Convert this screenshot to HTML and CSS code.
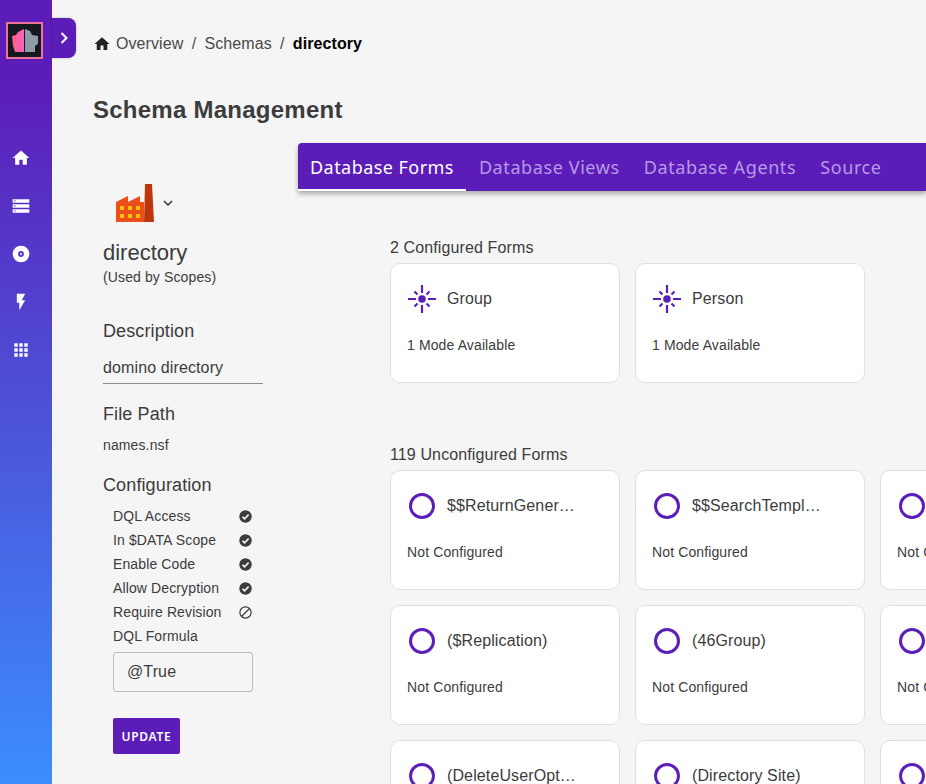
FILE: index.html
```html
<!DOCTYPE html>
<html lang="en">
<head>
    <meta charset="UTF-8">
    <meta name="viewport" content="width=device-width, initial-scale=1.0">
    <title>Schema Management</title>
    <link rel="stylesheet" href="styles.css">
</head>
<body>
    <div class="app">
        <nav class="sidebar">
            <div class="logo">
                <svg viewBox="0 0 33 33" width="33" height="33">
                    <defs>
                        <linearGradient id="logoPink" x1="0" x2="1" y1="0" y2="0">
                            <stop offset="0" stop-color="#ff5f7f"/>
                            <stop offset="1" stop-color="#ff62c4"/>
                        </linearGradient>
                    </defs>
                    <rect width="33" height="33" fill="#14181f"/>
                    <path d="M4 12l4-1 2-3 6-3v23H7l-2-6z" fill="url(#logoPink)"/>
                    <path d="M17 5l5 2 2 4 6 1v8l-3 2v6H17z" fill="#8f9ba6"/>
                </svg>
            </div>
            <ul class="side-icons">
                <li>
                    <svg viewBox="0 0 24 24" width="20" height="20"><path d="M10 20v-6h4v6h5v-8h3L12 3 2 12h3v8z"/></svg>
                </li>
                <li>
                    <svg viewBox="0 0 24 24" width="20" height="20"><path fill-rule="evenodd" d="M2 4h20v4H2zM4 5.3v1.4h1.6V5.3zM2 10h20v4H2zM4 11.3v1.4h1.6v-1.4zM2 16h20v4H2zM4 17.3v1.4h1.6v-1.4z"/></svg>
                </li>
                <li>
                    <svg viewBox="0 0 24 24" width="20" height="20"><path fill-rule="evenodd" d="M12 2a10 10 0 1 0 0 20 10 10 0 0 0 0-20zm0 6.5a3.500 3.500 0 1 1 0 7 3.500 3.500 0 0 1 0-7zm0 2.300a1.200 1.200 0 1 0 0 2.400 1.200 1.200 0 0 0 0-2.400z"/></svg>
                </li>
                <li>
                    <svg viewBox="0 0 24 24" width="20" height="20"><path d="M7 2v11h3v9l7-12h-4l4-8z"/></svg>
                </li>
                <li>
                    <svg viewBox="0 0 24 24" width="20" height="20"><path d="M4 4h4v4H4zM10 4h4v4h-4zM16 4h4v4h-4zM4 10h4v4H4zM10 10h4v4h-4zM16 10h4v4h-4zM4 16h4v4H4zM10 16h4v4h-4zM16 16h4v4h-4z"/></svg>
                </li>
            </ul>
        </nav>
        <button class="side-toggle">
            <svg viewBox="0 0 24 24" width="20" height="20"><path d="M9 6l6 6-6 6" fill="none" stroke="#fff" stroke-width="2.4"/></svg>
        </button>

        <main class="main">
            <div class="breadcrumb">
                <svg viewBox="0 0 24 24" width="18" height="18"><path d="M10 20v-6h4v6h5v-8h3L12 3 2 12h3v8z"/></svg>
                <span class="crumb">Overview</span>
                <span class="sep">/</span>
                <span class="crumb">Schemas</span>
                <span class="sep">/</span>
                <span class="crumb current">directory</span>
            </div>
            <h1>Schema Management</h1>

            <div class="layout">
                <aside class="details">
                    <div class="schema-icon">
                        <svg viewBox="0 0 38 38" width="38" height="38">
                            <path d="M0 38V18l12-6v6l12-6v6h4V38z" fill="#e94e1b"/>
                            <path d="M29 0h7l2 38H28z" fill="#bf360c"/>
                            <path d="M4 22h4v4H4zM12 22h4v4h-4zM20 22h4v4h-4zM4 30h4v4H4zM12 30h4v4h-4zM20 30h4v4h-4z" fill="#ffc107"/>
                        </svg>
                        <svg class="chevron" viewBox="0 0 24 24" width="16" height="16"><path d="M6 9l6 6 6-6" fill="none" stroke="#333" stroke-width="2.2"/></svg>
                    </div>
                    <div class="schema-name">directory</div>
                    <div class="schema-note">(Used by Scopes)</div>

                    <h2 class="desc-title">Description</h2>
                    <div class="desc-field">domino directory</div>

                    <h2 class="path-title">File Path</h2>
                    <div class="path-value">names.nsf</div>

                    <h2 class="config-title">Configuration</h2>
                    <ul class="config">
                        <li>DQL Access
                            <svg viewBox="0 0 24 24" width="13" height="13"><circle cx="12" cy="12" r="11.5" fill="#3c3c3c"/><path d="M6.5 12.5l3.8 3.8 7.500-8" fill="none" stroke="#fff" stroke-width="2.8"/></svg>
                        </li>
                        <li>In $DATA Scope
                            <svg viewBox="0 0 24 24" width="13" height="13"><circle cx="12" cy="12" r="11.5" fill="#3c3c3c"/><path d="M6.5 12.5l3.8 3.8 7.500-8" fill="none" stroke="#fff" stroke-width="2.8"/></svg>
                        </li>
                        <li>Enable Code
                            <svg viewBox="0 0 24 24" width="13" height="13"><circle cx="12" cy="12" r="11.5" fill="#3c3c3c"/><path d="M6.5 12.5l3.8 3.8 7.500-8" fill="none" stroke="#fff" stroke-width="2.8"/></svg>
                        </li>
                        <li>Allow Decryption
                            <svg viewBox="0 0 24 24" width="13" height="13"><circle cx="12" cy="12" r="11.5" fill="#3c3c3c"/><path d="M6.5 12.5l3.8 3.8 7.500-8" fill="none" stroke="#fff" stroke-width="2.8"/></svg>
                        </li>
                        <li>Require Revision
                            <svg viewBox="0 0 24 24" width="13" height="13"><circle cx="12" cy="12" r="10.4" fill="none" stroke="#3c3c3c" stroke-width="2.2"/><path d="M5 19L19 5" stroke="#3c3c3c" stroke-width="2.2"/></svg>
                        </li>
                        <li>DQL Formula</li>
                    </ul>
                    <div class="formula">@True</div>
                    <button class="update">UPDATE</button>
                </aside>

                <section class="content">
                    <div class="tabs">
                        <a class="tab active">Database Forms</a>
                        <a class="tab">Database Views</a>
                        <a class="tab">Database Agents</a>
                        <a class="tab">Source</a>
                    </div>

                    <div class="forms">
                        <div class="group-label">2 Configured Forms</div>
                        <div class="cards">
                            <div class="card">
                                <div class="card-head">
                                    <svg class="burst" viewBox="0 0 28 28" width="28" height="28"><circle cx="14" cy="14" r="3.8"/><path d="M14 0v8M14 20v8M0 14h8M20 14h8M6.500 6.500l3 3M18.500 18.500l3 3M6.500 21.500l3-3M18.500 9.500l3-3" fill="none" stroke="#5b1eb9" stroke-width="2.2"/></svg>
                                    <span class="card-title">Group</span>
                                </div>
                                <div class="card-note">1 Mode Available</div>
                            </div>
                            <div class="card">
                                <div class="card-head">
                                    <svg class="burst" viewBox="0 0 28 28" width="28" height="28"><circle cx="14" cy="14" r="3.8"/><path d="M14 0v8M14 20v8M0 14h8M20 14h8M6.500 6.500l3 3M18.500 18.500l3 3M6.500 21.500l3-3M18.500 9.500l3-3" fill="none" stroke="#5b1eb9" stroke-width="2.2"/></svg>
                                    <span class="card-title">Person</span>
                                </div>
                                <div class="card-note">1 Mode Available</div>
                            </div>
                        </div>

                        <div class="group-label second">119 Unconfigured Forms</div>
                        <div class="cards">
                            <div class="card">
                                <div class="card-head"><span class="ring"></span><span class="card-title">$$ReturnGener…</span></div>
                                <div class="card-note">Not Configured</div>
                            </div>
                            <div class="card">
                                <div class="card-head"><span class="ring"></span><span class="card-title">$$SearchTempl…</span></div>
                                <div class="card-note">Not Configured</div>
                            </div>
                            <div class="card">
                                <div class="card-head"><span class="ring"></span></div>
                                <div class="card-note">Not Configured</div>
                            </div>
                            <div class="card">
                                <div class="card-head"><span class="ring"></span><span class="card-title">($Replication)</span></div>
                                <div class="card-note">Not Configured</div>
                            </div>
                            <div class="card">
                                <div class="card-head"><span class="ring"></span><span class="card-title">(46Group)</span></div>
                                <div class="card-note">Not Configured</div>
                            </div>
                            <div class="card">
                                <div class="card-head"><span class="ring"></span></div>
                                <div class="card-note">Not Configured</div>
                            </div>
                            <div class="card">
                                <div class="card-head"><span class="ring"></span><span class="card-title">(DeleteUserOpt…</span></div>
                                <div class="card-note">Not Configured</div>
                            </div>
                            <div class="card">
                                <div class="card-head"><span class="ring"></span><span class="card-title">(Directory Site)</span></div>
                                <div class="card-note">Not Configured</div>
                            </div>
                            <div class="card">
                                <div class="card-head"><span class="ring"></span></div>
                                <div class="card-note">Not Configured</div>
                            </div>
                        </div>
                    </div>
                </section>
            </div>
        </main>
    </div>
</body>
</html>
```

FILE: styles.css
```css
html, body {
    margin: 0;
    height: 100%;
    overflow: hidden;
}
body {
    font-family: "Liberation Sans", Arial, sans-serif;
    letter-spacing: 0.12px;
    background: #f5f5f5;
    color: #3c3c3c;
}
ul {
    list-style: none;
    margin: 0;
    padding: 0;
}
.app {
    display: flex;
    height: 784px;
    position: relative;
    overflow: hidden;
}

/* sidebar */
.sidebar {
    width: 52px;
    flex: none;
    padding-top: 22px;
    box-sizing: border-box;
    background: linear-gradient(180deg, #5c1cb8 0%, #5c1cb8 10%, #3b8efc 100%);
}
.logo {
    width: 33px;
    height: 33px;
    margin-left: 6px;
    border: 2px solid #ee7299;
}
.logo svg {
    display: block;
}
.side-icons {
    width: 42px;
    margin-top: 89px;
    display: flex;
    flex-direction: column;
    align-items: center;
    gap: 28px;
}
.side-icons li {
    height: 20px;
}
.side-icons svg {
    display: block;
    fill: #fff;
}
.side-toggle {
    position: absolute;
    left: 52px;
    top: 18px;
    width: 24px;
    height: 40px;
    padding: 0;
    border: none;
    border-radius: 0 8px 8px 0;
    background: #5c1cb8;
    box-shadow: 0 0 2px rgba(0, 0, 0, 0.3);
    display: flex;
    align-items: center;
    justify-content: center;
}

/* main column */
.main {
    flex: 1;
    min-width: 0;
    padding: 0 0 0 41px;
}
.breadcrumb {
    height: 87px;
    display: flex;
    align-items: center;
    gap: 8.3px;
    font-size: 16px;
    letter-spacing: 0.08px;
    color: #4a4a4a;
}
.breadcrumb svg {
    fill: #222;
    margin-right: -3.3px;
}
.crumb.current {
    font-weight: bold;
    color: #000;
}
h1 {
    margin: 9px 0 0;
    font-size: 24px;
    line-height: 28px;
    letter-spacing: 0.25px;
    color: #3c3c3c;
}
.layout {
    display: flex;
    margin-top: 19px;
}

/* left details */
.details {
    width: 205px;
    flex: none;
    padding: 41px 0 0 10px;
    box-sizing: border-box;
}
.schema-icon {
    display: flex;
    align-items: center;
    gap: 6px;
    margin-left: 13px;
}
.schema-name {
    font-size: 22px;
    line-height: 26px;
    letter-spacing: 0;
    margin-top: 18px;
}
.schema-note {
    font-size: 14px;
    line-height: 16px;
    margin-top: 3px;
}
h2 {
    font-size: 18px;
    font-weight: normal;
    line-height: 22px;
    margin: 0;
}
.desc-title {
    margin-top: 35px;
}
.desc-field {
    width: 160px;
    font-size: 16px;
    line-height: 20px;
    margin-top: 16px;
    padding-bottom: 5px;
    border-bottom: 1px solid #8c8c8c;
}
.path-title {
    margin-top: 19px;
}
.path-value {
    font-size: 14px;
    line-height: 16px;
    margin-top: 12px;
}
.config-title {
    margin-top: 21px;
}
.config {
    width: 139px;
    margin: 8px 0 0 10px;
    font-size: 14px;
}
.config li {
    height: 24px;
    display: flex;
    align-items: center;
    justify-content: space-between;
}
.formula {
    width: 140px;
    height: 40px;
    line-height: 38px;
    box-sizing: border-box;
    margin: 4px 0 0 10px;
    padding-left: 13px;
    font-size: 16px;
    border: 1px solid #bdbdbd;
    border-radius: 3px;
}
.update {
    display: block;
    margin: 26px 0 0 10px;
    width: 67px;
    height: 36px;
    padding: 0;
    border: none;
    border-radius: 2px;
    background: #5c1cb8;
    color: #fff;
    font-family: "Noto Sans", sans-serif;
    font-size: 12px;
    font-weight: 600;
    letter-spacing: 0.7px;
}

/* tabs */
.content {
    flex: 1;
    min-width: 0;
}
.tabs {
    display: flex;
    height: 48px;
    background: #5c1cb8;
    border-radius: 4px 0 0 0;
    box-shadow: 0 3px 5px rgba(0, 0, 0, 0.3);
    font-family: "Noto Sans", sans-serif;
    font-size: 18px;
    letter-spacing: 0.6px;
}
.tab {
    padding: 0 12px;
    line-height: 48px;
    color: #b79ae6;
}
.tab.active {
    color: #fff;
    letter-spacing: 0.45px;
    margin-right: 1px;
    box-shadow: inset 0 -2px 0 #fff;
}

/* form cards */
.forms {
    padding: 47px 0 0 92px;
}
.group-label {
    font-size: 16px;
    line-height: 20px;
}
.group-label.second {
    margin-top: 62px;
}
.cards {
    display: grid;
    grid-template-columns: repeat(3, 230px);
    gap: 15px;
    margin-top: 5px;
}
.card {
    height: 120px;
    box-sizing: border-box;
    padding: 21px 16px;
    background: #fff;
    border: 1px solid #e0e0e0;
    border-radius: 10px;
}
.card-head {
    display: flex;
    align-items: center;
    height: 28px;
    gap: 12px;
}
.burst {
    flex: none;
    margin: 0 -1px 0 1px;
    fill: #5b1eb9;
}
.ring {
    flex: none;
    width: 26px;
    height: 26px;
    margin-left: 2px;
    box-sizing: border-box;
    border: 3px solid #5b1eb9;
    border-radius: 50%;
}
.card-title {
    font-size: 16px;
    white-space: nowrap;
}
.card-note {
    font-size: 14px;
    line-height: 16px;
    margin-top: 24px;
}
```
